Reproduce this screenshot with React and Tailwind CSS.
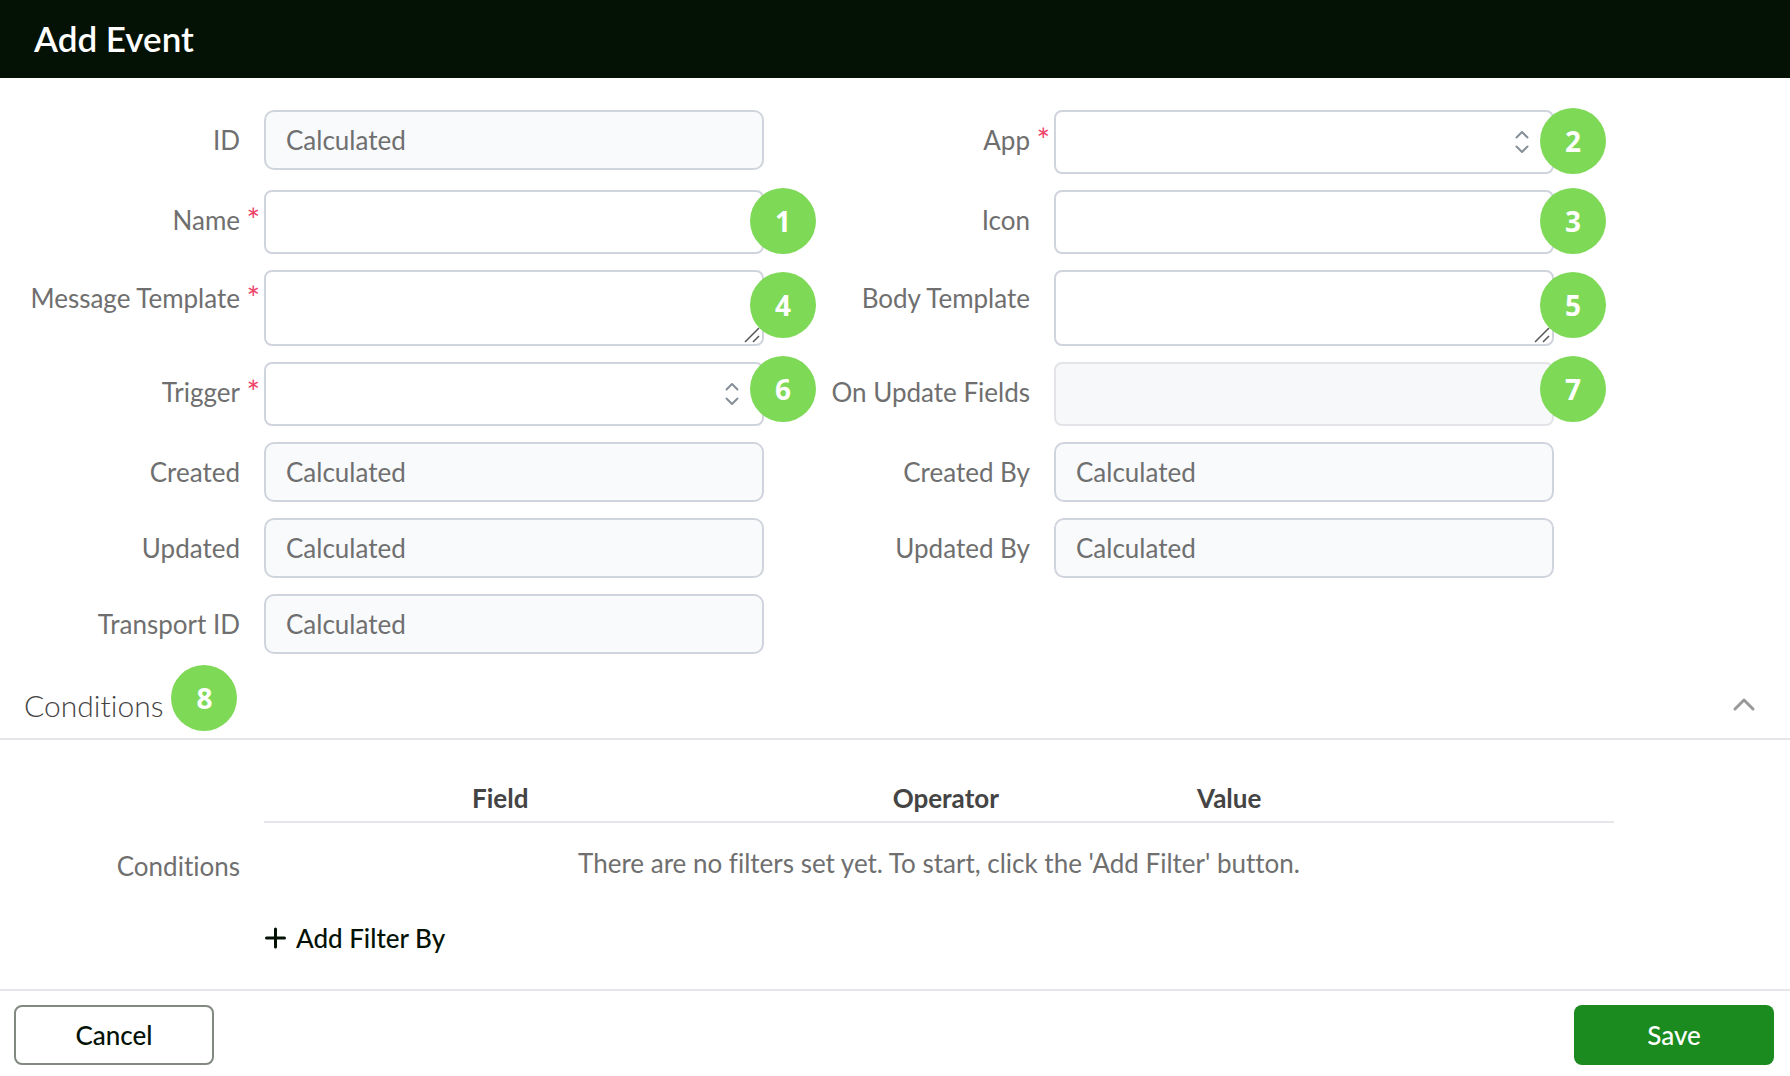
import React, { useState } from 'react';

const fields = [
  { id: 'id', label: 'ID', type: 'readonly' },
  { id: 'app', label: 'App', type: 'select', required: true, badge: 2, badgeTop: '-top-0.5' },
  { id: 'name', label: 'Name', type: 'text', required: true, badge: 1, badgeTop: '-top-0.5' },
  { id: 'icon', label: 'Icon', type: 'text', badge: 3, badgeTop: '-top-0.5' },
  { id: 'message', label: 'Message Template', type: 'textarea', required: true, badge: 4, badgeTop: 'top-0.5' },
  { id: 'body', label: 'Body Template', type: 'textarea', badge: 5, badgeTop: 'top-0.5' },
  { id: 'trigger', label: 'Trigger', type: 'select', required: true, badge: 6, badgeTop: '-top-1.5' },
  { id: 'on-update', label: 'On Update Fields', type: 'disabled', badge: 7, badgeTop: '-top-1.5' },
  { id: 'created', label: 'Created', type: 'readonly' },
  { id: 'created-by', label: 'Created By', type: 'readonly' },
  { id: 'updated', label: 'Updated', type: 'readonly' },
  { id: 'updated-by', label: 'Updated By', type: 'readonly' },
  { id: 'transport', label: 'Transport ID', type: 'readonly' },
];

const box = 'block w-full border-2 px-5 outline-none';
const editable = 'rounded-lg border-[#d0d4dc] bg-white text-[#444]';

function Badge({ children, className = '' }) {
  return (
    <span
      className={`flex h-[66px] w-[66px] items-center justify-center rounded-full bg-[#7ed957] font-['Open_Sans',sans-serif] text-[28px] leading-8 font-bold text-white ${className}`}
    >
      {children}
    </span>
  );
}

function Control({ field }) {
  if (field.type === 'readonly') {
    return (
      <input
        id={field.id}
        readOnly
        value="Calculated"
        className={`${box} h-[60px] rounded-[10px] border-[#d0d4dc] bg-[#f9fafc] text-[#6f6f6f]`}
      />
    );
  }
  if (field.type === 'disabled') {
    return (
      <input id={field.id} disabled className={`${box} h-16 rounded-lg border-[#e2e4e8] bg-[#f7f8fa]`} />
    );
  }
  if (field.type === 'select') {
    return (
      <>
        <select id={field.id} className={`${box} ${editable} h-16 appearance-none`}>
          <option value=""></option>
        </select>
        <svg
          className="pointer-events-none absolute top-5 right-5 h-6 w-6"
          viewBox="0 0 24 24"
          fill="none"
          stroke="#868e98"
          strokeWidth="2"
          strokeLinecap="round"
          strokeLinejoin="round"
        >
          <path d="M6.5 7.5 12 2 17.5 7.5" />
          <path d="M6.5 16.5 12 22 17.5 16.5" />
        </svg>
      </>
    );
  }
  if (field.type === 'textarea') {
    return (
      <>
        <textarea id={field.id} className={`${box} ${editable} h-[76px] resize-none py-3`} />
        <svg
          className="pointer-events-none absolute right-1 bottom-[3px] h-4 w-4"
          viewBox="0 0 16 16"
          stroke="#555"
          strokeWidth="1.5"
        >
          <path d="M1 15 15 1M9 15l6-6" />
        </svg>
      </>
    );
  }
  return <input id={field.id} type="text" className={`${box} ${editable} h-16`} />;
}

function Field({ field }) {
  return (
    <>
      <label
        htmlFor={field.id}
        className={`relative text-right whitespace-nowrap text-[#6f6f6f] ${
          field.type === 'textarea' ? 'leading-[56px]' : 'leading-[60px]'
        }`}
      >
        {field.label}
        {field.required && <span className="absolute top-0 -right-5 text-[32px] text-[#ee4266]">*</span>}
      </label>
      <div className="relative min-w-0">
        <Control field={field} />
        {field.badge && <Badge className={`absolute -right-[52px] ${field.badgeTop}`}>{field.badge}</Badge>}
      </div>
    </>
  );
}

export default function AddEventPage() {
  const [open, setOpen] = useState(true);

  return (
    <div className="flex min-h-screen w-full flex-col bg-white font-['Lato',sans-serif] text-[26px] leading-8 [font-variant-ligatures:none]">
      <header className="bg-[#031205] px-[34px] pt-[18px] pb-5">
        <h1 className="text-[35px] leading-10 font-semibold text-white">Add Event</h1>
      </header>

      <form className="flex flex-1 flex-col" onSubmit={(e) => e.preventDefault()}>
        <div className="grid grid-cols-[240px_minmax(0,1fr)_242px_minmax(0,1fr)] gap-x-6 gap-y-4 pt-8 pr-[236px]">
          {fields.map((field) => (
            <Field key={field.id} field={field} />
          ))}
        </div>

        {/* Conditions section */}
        <div className="mt-[11px] flex items-start justify-between border-b-2 border-[#e5e5ea] pr-[34px] pb-[7px] pl-6">
          <div className="flex items-start gap-2">
            <h2 className="pt-6 text-[30px] leading-8 font-light text-[#444]">Conditions</h2>
            <Badge>8</Badge>
          </div>
          <button type="button" aria-label="Toggle conditions" onClick={() => setOpen(!open)} className="mt-[27px]">
            <svg className="h-6 w-6" viewBox="0 0 24 24" fill="none" stroke="#999" strokeWidth="3" strokeLinecap="round" strokeLinejoin="round">
              <path d="M3 17 12 8 21 17" />
            </svg>
          </button>
        </div>

        {open && (
          <div className="grid grid-cols-[240px_minmax(0,1fr)] items-center gap-x-6 pt-8 pr-[176px] pb-[29px]">
            <span className="text-right text-[#6f6f6f]">Conditions</span>
            <div>
              <table className="w-full table-fixed border-collapse">
                <thead>
                  <tr className="h-[50px] border-b-2 border-[#e5e5ea] text-[#444]">
                    <th className="w-[35%] pt-0.5 font-bold">Field</th>
                    <th className="w-[31%] pt-0.5 font-bold">Operator</th>
                    <th className="w-[11%] pt-0.5 font-bold">Value</th>
                    <th></th>
                  </tr>
                </thead>
                <tbody>
                  <tr className="h-[82px]">
                    <td colSpan={4} className="pb-0.5 text-center text-[#6f6f6f]">
                      There are no filters set yet. To start, click the 'Add Filter' button.
                    </td>
                  </tr>
                </tbody>
              </table>
              <button type="button" className="mt-3 flex h-11 items-center gap-2.5 font-medium text-[#031205]">
                <svg className="h-[22px] w-[22px]" viewBox="0 0 22 22" stroke="currentColor" strokeWidth="3" strokeLinecap="round">
                  <path d="M11.5 2v18M2.5 11h18" />
                </svg>
                Add Filter By
              </button>
            </div>
          </div>
        )}

        <footer className="flex justify-between border-t-2 border-[#e5e5ea] pt-3.5 pr-4 pb-[11px] pl-3.5">
          <button type="button" className="h-[60px] w-[200px] rounded-lg border-2 border-[#818981] font-medium text-[#031205]">
            Cancel
          </button>
          <button type="submit" className="h-[60px] w-[200px] rounded-lg bg-[#1b8a1f] font-medium text-white">
            Save
          </button>
        </footer>
      </form>
    </div>
  );
}
